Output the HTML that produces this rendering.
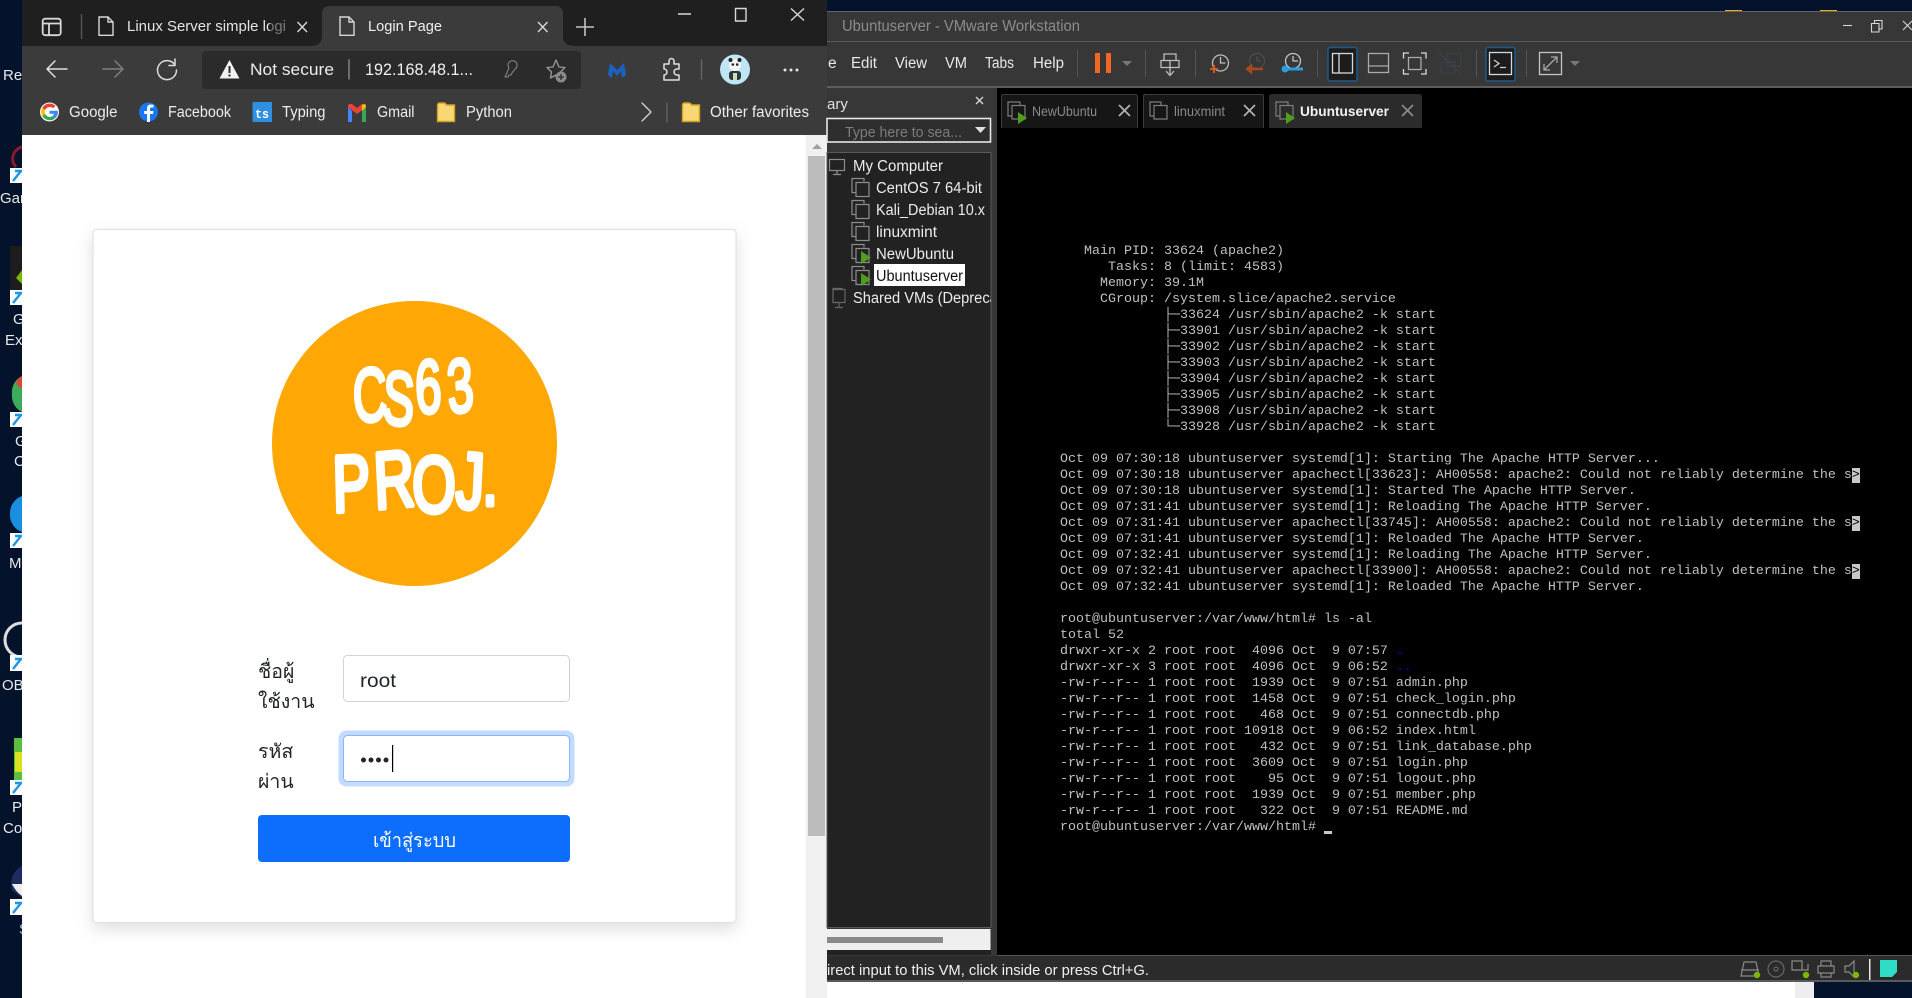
<!DOCTYPE html>
<html lang="en">
<head>
<meta charset="utf-8">
<title>Screenshot</title>
<style>
html,body{margin:0;padding:0;width:1912px;height:998px;overflow:hidden;background:#04122b}
svg{position:absolute;left:0;top:0;display:block}
svg text{font-family:"Liberation Sans","Noto Sans CJK SC",sans-serif;white-space:pre}
#term{position:absolute;left:1060px;top:243.500px;margin:0;font:13.33px/16px "Liberation Mono","DejaVu Sans Mono",monospace;color:#c0c0c0;white-space:pre}
#term b{font-weight:normal;background:#c8c8c8;color:#000}
#term i{font-style:normal;color:#0000d0}
#cur{position:absolute;left:1324px;top:831px;width:8px;height:3px;background:#c8c8c8}
</style>
</head>
<body>
<svg width="1912" height="998" viewBox="0 0 1912 998" xmlns="http://www.w3.org/2000/svg">
<defs>
<filter id="s" x="-10%" y="-10%" width="120%" height="120%"><feDropShadow dx="0" dy="6" stdDeviation="8" flood-color="#000" flood-opacity=".13"/></filter>
<clipPath id="treeclip"><rect x="827" y="152" width="164" height="775"/></clipPath>
</defs>
<rect width="1912" height="998" fill="#04122b"/>
<!-- desktop left -->
<g fill="#e8e8e8" font-size="15">
<text x="3" y="80">Rec</text><text x="0" y="203">Gar</text><text x="13" y="324">G</text><text x="5" y="345">Exp</text><text x="15" y="446">G</text><text x="14" y="466">C</text><text x="9" y="568">M</text><text x="2" y="690">OB</text><text x="12" y="812">Py</text><text x="3" y="833">Co</text><text x="19" y="934" fill="#9fd0ff">S</text>
</g>
<path d="M22 147a12 12 0 0 0 -6 20" fill="none" stroke="#8b1a2a" stroke-width="3"/>
<rect x="10" y="246" width="12" height="44" fill="#1d1d1d"/><path d="M16 278l6-8v14z" fill="#76b900"/>
<path d="M22 376a18 18 0 0 0 -10 18a18 18 0 0 0 10 18z" fill="#3cab5a"/><path d="M22 376a12 12 0 0 0 -6 8l6 5z" fill="#d8483a"/>
<path d="M22 496a18 18 0 0 0 -12 18a18 18 0 0 0 12 18z" fill="#1a8fe0"/>
<path d="M22 623a17 17 0 0 0 0 34" fill="none" stroke="#ddd" stroke-width="3"/>
<rect x="14" y="738" width="8" height="42" fill="#5abf3c"/><rect x="15" y="752" width="7" height="20" fill="#dde020"/>
<path d="M22 866a20 20 0 0 0 -10 24l10 8z" fill="#1c2c60"/><path d="M12 884q4 8 10 12v-12z" fill="#eee"/>
<g fill="#fff"><rect x="10" y="168" width="12" height="15"/><rect x="10" y="290" width="12" height="15"/><rect x="10" y="412" width="12" height="15"/><rect x="10" y="533" width="12" height="15"/><rect x="10" y="655" width="12" height="16"/><rect x="10" y="780" width="12" height="15"/><rect x="10" y="899" width="12" height="16"/></g>
<g fill="none" stroke="#1e96e8" stroke-width="2.4"><path d="M13 181l8-10M15 171h7"/><path d="M13 303l8-10M15 293h7"/><path d="M13 425l8-10M15 415h7"/><path d="M13 546l8-10M15 536h7"/><path d="M13 669l8-10M15 659h7"/><path d="M13 793l8-10M15 783h7"/><path d="M13 913l8-10M15 903h7"/></g>

<!-- browser chrome -->
<rect x="22" y="0" width="805" height="46" fill="#1f1f1f"/>
<rect x="22" y="46" width="805" height="89" fill="#3b3b3b"/>
<path d="M310 46q12 0 12-10V14q0-8 8-8h225q8 0 8 8v22q0 10 12 10z" fill="#3b3b3b"/>
<g fill="none" stroke="#d8d8d8" stroke-width="1.400">
<rect x="42.700" y="18.700" width="18" height="16.500" rx="2.500" stroke-width="1.800"/><path d="M43 23.500h17M49 23.500v11.500" stroke-width="1.800"/>
<path d="M81.500 14v25" stroke="#555"/>
<path d="M99 17h9l5 5v13.300h-14zM108 17v5h5"/>
<path d="M340 17h9l5 5v13.300h-14zM349 17v5h5"/>
<path d="M297.500 22l9.500 10M307 22l-9.500 10M538 22l9.500 10M547.500 22l-9.500 10"/>
<path d="M585 18v18M576 27h18" stroke="#c4c4c4" stroke-width="1.600"/>
<path d="M678 14h13M735.500 8.500h10.500v12.500h-10.500zM791 8.500l13 12M804 8.500l-13 12"/>
</g>
<g fill="#e4e4e4" font-size="15">
<text x="127" y="31" textLength="159" lengthAdjust="spacingAndGlyphs">Linux Server simple logi</text>
<text x="368" y="31" textLength="74" lengthAdjust="spacingAndGlyphs" fill="#f0f0f0">Login Page</text>
</g>
<rect x="270" y="12" width="18" height="28" fill="#1f1f1f" opacity=".55"/>
<rect x="202" y="51" width="379" height="38" rx="4" fill="#2b2b2b"/>
<g fill="none" stroke-linecap="round" stroke-linejoin="round">
<path d="M47 69h20M47 69l8-8M47 69l8 8" stroke="#e0e0e0" stroke-width="1.500"/>
<path d="M103 69h20M123 69l-8-8M123 69l-8 8" stroke="#808080" stroke-width="1.500"/>
<path d="M175 65a9.500 9.500 0 1 0 1.500 5M175 59v6.500h-6" stroke="#dcdcdc" stroke-width="1.500"/>
<path d="M349 60v19" stroke="#8a8a8a" stroke-width="1.400"/>
<path d="M517 65a4.500 4.500 0 1 0-8 3l-4 9h3l1-2h2l1-2 3-4a4.500 4.500 0 0 0 2-4z" stroke="#777" stroke-width="1.300"/>
<path d="M556 60l3 7 6 .5-4.500 4.500 1 6-5.500-3-5.500 3 1-6-4.500-4.500 6-.5z" stroke="#999" stroke-width="1.300"/>
<path d="M664 64h5v-3a2.500 2.500 0 0 1 5 0v3h5v5h-2a3 3 0 0 0 0 6h2v5h-15v-5a3 3 0 0 0 0-6z" stroke="#e0e0e0" stroke-width="1.500"/>
<path d="M701.500 60v19" stroke="#666" stroke-width="1.400"/>
<path d="M642 103l9 9-9 9" stroke="#d4d4d4" stroke-width="1.300"/>
<path d="M667 103v19" stroke="#666" stroke-width="1.200"/>
</g>
<circle cx="561" cy="77" r="5.500" fill="#8c8c8c"/><path d="M561 74v6M558 77h6" stroke="#2b2b2b" stroke-width="1.300"/>
<path d="M229.500 60l10 18.500h-20z" fill="#f2f2f2"/><path d="M229.500 66v7M229.500 74.500v2" stroke="#2b2b2b" stroke-width="2"/>
<text x="250" y="75" font-size="17" fill="#ececec" textLength="84" lengthAdjust="spacingAndGlyphs">Not secure</text>
<text x="365" y="75" font-size="17" fill="#f0f0f0" textLength="108" lengthAdjust="spacingAndGlyphs">192.168.48.1...</text>
<path d="M608 75l2-12 7 7 7-7 2 12-4 3-1-7-4 5-4-5-1 7z" fill="#1b62c0"/>
<circle cx="735" cy="69.500" r="15" fill="#bfe6f5"/>
<circle cx="735" cy="65" r="6" fill="#f4f4f4"/><circle cx="730.500" cy="60" r="2" fill="#222"/><circle cx="739.500" cy="60" r="2" fill="#222"/><circle cx="732.800" cy="64.500" r="1.300" fill="#222"/><circle cx="737.200" cy="64.500" r="1.300" fill="#222"/>
<rect x="729" y="71" width="12" height="9" rx="3" fill="#2f3a33"/><rect x="733" y="73" width="4" height="7" fill="#c8e0c0"/>
<g fill="#e4e4e4"><circle cx="785" cy="70" r="1.500"/><circle cx="791" cy="70" r="1.500"/><circle cx="797" cy="70" r="1.500"/></g>
<!-- bookmarks -->
<circle cx="49.500" cy="112" r="9.500" fill="#fff"/>
<path d="M49.500 103.500a8.500 8.500 0 0 1 6 2.400l-2.400 2.400a5 5 0 0 0-8 1.800l-2.800-2.200a8.500 8.500 0 0 1 7.200-4.400z" fill="#ea4335"/>
<path d="M42.300 107.900l2.800 2.200a5 5 0 0 0 0 3.800l-2.800 2.200a8.500 8.500 0 0 1 0-8.200z" fill="#fbbc05"/>
<path d="M42.300 116.100l2.800-2.200a5 5 0 0 0 7.400 2.200l2.700 2.100a8.500 8.500 0 0 1-12.900-2.100z" fill="#34a853"/>
<path d="M58 112.800a8.500 8.500 0 0 1-2.800 5.400l-2.700-2.100a3.600 3.600 0 0 0 1.400-2.400h-4.400v-3h8.300z" fill="#4285f4"/>
<circle cx="148.500" cy="112" r="9.500" fill="#1877f2"/><path d="M150 122v-8h3l.5-3H150v-2q0-1.500 1.700-1.500H153.500v-2.800q-1-.2-2.600-.2-3.900 0-3.900 4v2.500h-2.800v3H147v8z" fill="#fff"/>
<rect x="252.500" y="102" width="19.500" height="20" fill="#2f8fe0"/><text x="255" y="118" font-size="13" font-weight="bold" fill="#fff" textLength="14" lengthAdjust="spacingAndGlyphs" style="font-family:'Liberation Mono',monospace">ts</text>
<path d="M348 107v15h4v-11z" fill="#4285f4"/><path d="M362 111v11h4v-15z" fill="#34a853"/><path d="M348 107q0-4 4-3l5 4 5-4q4-1 4 3l-9 7z" fill="#ea4335"/><path d="M362 105l2-1q2 0 2 3l-4 4z" fill="#fbbc05"/>
<path d="M437.500 106q0-3 2-3h4q2 0 3 2h8v16.500h-17z" fill="#f8d775" stroke="#d4a11e" stroke-width="1.400"/>
<path d="M682.500 106q0-3 2-3h4q2 0 3 2h8v16.500h-17z" fill="#f8d775" stroke="#d4a11e" stroke-width="1.400"/>
<g fill="#ececec" font-size="15.500">
<text x="69" y="117" textLength="48.500" lengthAdjust="spacingAndGlyphs">Google</text>
<text x="168" y="117" textLength="63" lengthAdjust="spacingAndGlyphs">Facebook</text>
<text x="282" y="117" textLength="43.500" lengthAdjust="spacingAndGlyphs">Typing</text>
<text x="377" y="117" textLength="37.500" lengthAdjust="spacingAndGlyphs">Gmail</text>
<text x="466" y="117" textLength="46" lengthAdjust="spacingAndGlyphs">Python</text>
<text x="710" y="117" textLength="99" lengthAdjust="spacingAndGlyphs">Other favorites</text>
</g>

<!-- browser content -->
<rect x="22" y="135" width="805" height="863" fill="#fff"/>
<rect x="806" y="135" width="21" height="863" fill="#f0f0f0"/>
<path d="M817 144l5 5h-10z" fill="#a0a0a0"/>
<rect x="808" y="156" width="17" height="680" fill="#bcbcbc"/>
<!-- card -->
<rect x="93" y="229.500" width="643" height="693" rx="3" fill="#fff" stroke="#dfdfdf" filter="url(#s)"/>
<circle cx="414.500" cy="443.500" r="142.500" fill="#ffa704"/>
<g fill="#fff" stroke="#fff" stroke-linejoin="round" stroke-linecap="round">
<text transform="scale(.62 1)" font-size="76" stroke-width="4" x="571 616 671 724" y="423 423 414 414" rotate="-4 4 -3 -6">CS63</text>
<text transform="scale(.7 1)" font-size="80" stroke-width="5" x="476 536 589 650 689" y="512 509 512 507 505" rotate="-2 -4 0 4 0">PROJ.</text>
</g>
<!-- form -->
<g fill="#212529" font-size="19.500">
<text x="258" y="678">ชื่อผู้</text>
<text x="258" y="708">ใช้งาน</text>
<text x="258" y="758">รหัส</text>
<text x="258" y="788">ผ่าน</text>
</g>
<rect x="343.500" y="655.500" width="226" height="46" rx="4" fill="#fff" stroke="#ced4da"/>
<text x="360" y="687" font-size="19.500" fill="#212529" textLength="36" lengthAdjust="spacingAndGlyphs">root</text>
<rect x="338.500" y="730.500" width="236" height="56" rx="8" fill="#c2dbfe"/>
<rect x="343.500" y="735.500" width="226" height="46" rx="4" fill="#fff" stroke="#86b7fe"/>
<g fill="#212529"><circle cx="363.500" cy="760" r="2.500"/><circle cx="371" cy="760" r="2.500"/><circle cx="378.500" cy="760" r="2.500"/><circle cx="386" cy="760" r="2.500"/></g>
<rect x="392" y="745" width="1.200" height="27" fill="#000"/>
<rect x="258" y="815" width="312" height="47" rx="4" fill="#0d6efd"/>
<text x="373" y="847" font-size="19.500" fill="#fff" textLength="83" lengthAdjust="spacingAndGlyphs">เข้าสู่ระบบ</text>

<!-- vmware window -->
<rect x="827" y="11" width="1085" height="971" fill="#373737"/>
<rect x="827" y="11" width="1085" height="1" fill="#5c6670"/>
<rect x="827" y="41" width="1085" height="1" fill="#5a5a5a"/>
<rect x="827" y="86" width="1085" height="2" fill="#5c5c5c"/>
<rect x="1725" y="10" width="17" height="1" fill="#fa0"/><rect x="1820" y="10" width="17" height="1" fill="#fa0"/>
<text x="842" y="31" font-size="15.500" fill="#8c8c8c" textLength="238" lengthAdjust="spacingAndGlyphs">Ubuntuserver - VMware Workstation</text>
<g fill="none" stroke="#d8d8d8" stroke-width="1.100"><path d="M1843 25.500h9"/><path d="M1871.500 23.500h7.500v8.500h-7.500zM1874.500 23v-2.500h7.500v8.500h-3"/><path d="M1903 21l9 9M1912 21l-9 9"/></g>
<g fill="#e8e8e8" font-size="15.500">
<text x="828" y="68">e</text>
<text x="851" y="68" textLength="26" lengthAdjust="spacingAndGlyphs">Edit</text>
<text x="895" y="68" textLength="32" lengthAdjust="spacingAndGlyphs">View</text>
<text x="945" y="68" textLength="22" lengthAdjust="spacingAndGlyphs">VM</text>
<text x="985" y="68" textLength="29" lengthAdjust="spacingAndGlyphs">Tabs</text>
<text x="1033" y="68" textLength="31" lengthAdjust="spacingAndGlyphs">Help</text>
</g>
<g fill="#555"><rect x="1077" y="50" width="1" height="27"/><rect x="1145" y="50" width="1" height="27"/><rect x="1195" y="50" width="1" height="27"/><rect x="1317" y="50" width="1" height="27"/><rect x="1476" y="50" width="1" height="27"/><rect x="1526" y="50" width="1" height="27"/></g>
<rect x="1095" y="53" width="5" height="20" fill="#f26522"/><rect x="1106" y="53" width="5" height="20" fill="#f26522"/>
<path d="M1122 61h10l-5 5z" fill="#777"/>
<g fill="none" stroke="#bcbcbc" stroke-width="1.300">
<path d="M1161 60.500h18v7h-18zM1164 60.500v-6.500h12v6.500M1170 60.500v7M1170 67.500v7M1166 71l4 4.500 4-4.500"/>
<circle cx="1220.500" cy="63" r="8"/><path d="M1220.500 57v6h5" />
<circle cx="1293" cy="61" r="7.500" stroke="#c4c4c4"/><path d="M1293 56v5h5" stroke="#c4c4c4"/>
</g>
<path d="M1210 69h8M1214 65v8" stroke="#e85a20" stroke-width="1.800" fill="none"/>
<circle cx="1257" cy="61" r="7.500" fill="none" stroke="#4c4c4c" stroke-width="1.300"/><path d="M1257 56v5h4" fill="none" stroke="#4c4c4c" stroke-width="1.300"/>
<path d="M1247 69h16M1247 69l4-3v6z" stroke="#a84818" stroke-width="2.400" fill="#a84818"/>
<path d="M1283 69h20" stroke="#2b9be0" stroke-width="3"/><circle cx="1285" cy="69" r="3.500" fill="#2b9be0"/>
<rect x="1328" y="47.500" width="29" height="33.500" rx="2" fill="#1c1c1c" stroke="#1e5a8c" stroke-width="1.500"/>
<g fill="none" stroke="#d8d8d8" stroke-width="1.300">
<rect x="1332.500" y="53.500" width="20" height="19.500"/><path d="M1339 53.500v19.500"/>
<rect x="1368.500" y="53.500" width="20" height="19" stroke="#aaa"/><path d="M1368.500 66h20" stroke="#aaa"/>
<path d="M1403.500 58.500v-5.500h5.500M1421 53h5v5.500M1426 69v5h-5M1409 74h-5.500v-5"/>
<rect x="1408.500" y="57.500" width="12.500" height="12" stroke="#aaa"/>
</g>
<g fill="none" stroke="#38424a" stroke-width="1.300"><rect x="1447" y="53.500" width="14" height="13"/><rect x="1441" y="62" width="14" height="11"/><path d="M1439 53l22 21"/></g>
<rect x="1486" y="47.500" width="29" height="33.500" rx="2" fill="#1c1c1c" stroke="#1e5a8c" stroke-width="1.500"/>
<rect x="1489.500" y="52.500" width="22" height="22" fill="none" stroke="#d8d8d8" stroke-width="1.300"/>
<path d="M1494 60l5 3.500-5 3.500M1500 67.500h6" fill="none" stroke="#d0d0d0" stroke-width="1.300"/>
<rect x="1539.500" y="52.500" width="22" height="22" fill="none" stroke="#c4c4c4" stroke-width="1.300"/>
<path d="M1544 70l13-13M1551 57h6v6M1544 64v6h6" fill="none" stroke="#a8a8a8" stroke-width="1.300"/>
<path d="M1570 61h10l-5 5z" fill="#777"/>

<!-- library -->
<text x="827" y="109" font-size="15" fill="#e0e0e0">ary</text>
<path d="M976 97l7 7M983 97l-7 7" stroke="#d8d8d8" stroke-width="1.300"/>
<rect x="827" y="118.500" width="163.500" height="23.500" fill="#2e2e2e" stroke="#e6e6e6" stroke-width="1.600"/>
<text x="845" y="137" font-size="15" fill="#7c7c7c" textLength="117" lengthAdjust="spacingAndGlyphs">Type here to sea...</text>
<path d="M975 127h11l-5.500 6z" fill="#e0e0e0"/>
<rect x="827" y="152.500" width="164" height="775" fill="#222" stroke="#5a5a5a"/>
<g fill="none" stroke="#8c8c8c" stroke-width="1.200">
<rect x="829.500" y="159.500" width="15" height="11"/><path d="M837 171v3M833 174.500h8"/>
<path d="M852 179v-.5h12v3M856 182.500h13v14h-13zM852 178.500v14h4"/>
<path d="M852 201v-.5h12v3M856 204.500h13v14h-13zM852 200.500v14h4"/>
<path d="M852 223v-.5h12v3M856 226.500h13v14h-13zM852 222.500v14h4"/>
<path d="M852 245v-.5h12v3M856 248.500h13v14h-13zM852 244.500v14h4"/>
<path d="M852 267v-.5h12v3M856 270.500h13v14h-13zM852 266.500v14h4"/>
<path d="M833 289.500h12v13h-12zM833 289.500v-1h9v1M839 303v4M835 307.500h8" stroke="#666"/>
</g>
<path d="M861 251l10 6.500-10 6.500z" fill="#4f9d1c"/><path d="M861 273l10 6.500-10 6.500z" fill="#4f9d1c"/>
<rect x="874" y="264" width="91" height="22" fill="#fff"/>
<g fill="#ececec" font-size="15.500" clip-path="url(#treeclip)">
<text x="853" y="171" textLength="90" lengthAdjust="spacingAndGlyphs">My Computer</text>
<text x="876" y="193" textLength="106" lengthAdjust="spacingAndGlyphs">CentOS 7 64-bit</text>
<text x="876" y="215" textLength="109" lengthAdjust="spacingAndGlyphs">Kali_Debian 10.x</text>
<text x="876" y="237" textLength="61" lengthAdjust="spacingAndGlyphs">linuxmint</text>
<text x="876" y="259" textLength="78" lengthAdjust="spacingAndGlyphs">NewUbuntu</text>
<text x="876" y="281" textLength="87" lengthAdjust="spacingAndGlyphs" fill="#111">Ubuntuserver</text>
<text x="853" y="303" textLength="170" lengthAdjust="spacingAndGlyphs">Shared VMs (Deprecated)</text>
</g>
<rect x="827" y="929" width="163.500" height="21" fill="#efefef"/>
<rect x="827" y="937" width="116" height="6" fill="#8a8a8a"/>
<rect x="827" y="950" width="164" height="5" fill="#222"/>

<!-- terminal -->
<rect x="997" y="88" width="915" height="867" fill="#000"/>
<rect x="997" y="955" width="915" height="1" fill="#555"/>
<rect x="1001" y="94" width="136" height="34" fill="#161616"/><path d="M1001.500 128V97q0-2.500 2.500-2.500h131q2.500 0 2.500 2.500v31" fill="none" stroke="#3c3c3c"/>
<rect x="1143" y="94" width="121" height="34" fill="#161616"/><path d="M1143.500 128V97q0-2.500 2.500-2.500h115q2.500 0 2.500 2.500v31" fill="none" stroke="#3c3c3c"/>
<path d="M1269 128V97q0-3 3-3h147q3 0 3 3v31z" fill="#2b2b2b"/>
<g fill="none" stroke="#7c7c7c" stroke-width="1.200">
<path d="M1008 104v-2h12v3M1012 105.500h13v13.500h-13zM1008 102v14h4"/>
<path d="M1150 103v-1h11v3M1154 105.500h13v13.500h-13zM1150 102v14h4"/>
<path d="M1276 104v-2h12v3M1280 105.500h13v13.500h-13zM1276 102v14h4"/>
</g>
<path d="M1018 112l9 6-9 6z" fill="#4f9d1c"/><path d="M1286 112l9 6-9 6z" fill="#4f9d1c"/>
<g font-size="14">
<text x="1032" y="116" fill="#8a8a8a" textLength="65" lengthAdjust="spacingAndGlyphs">NewUbuntu</text>
<text x="1174" y="116" fill="#8a8a8a" textLength="51" lengthAdjust="spacingAndGlyphs">linuxmint</text>
<text x="1300" y="116" fill="#f2f2f2" font-weight="bold" textLength="89" lengthAdjust="spacingAndGlyphs">Ubuntuserver</text>
</g>
<g fill="none" stroke="#b0b0b0" stroke-width="1.800">
<path d="M1119 105l11 11M1130 105l-11 11"/><path d="M1244 105l11 11M1255 105l-11 11"/><path d="M1402 105l11 11M1413 105l-11 11" stroke="#8a8a8a"/>
</g>

<!-- status bar -->
<rect x="827" y="956" width="1085" height="24" fill="#2b2b2b"/>
<rect x="827" y="980" width="1085" height="2" fill="#5a5a5a"/>
<text x="827" y="975" font-size="14.500" fill="#f0f0f0" textLength="322" lengthAdjust="spacingAndGlyphs">irect input to this VM, click inside or press Ctrl+G.</text>
<g fill="none" stroke="#8a8a8a" stroke-width="1.200">
<path d="M1741 976l3-14h12l3 14zM1741 970h18"/>
<circle cx="1776" cy="969" r="8" stroke="#666"/><circle cx="1776" cy="969" r="2" stroke="#666"/>
<path d="M1792 961h10v9h-10zM1799 970h9v-6"/>
<path d="M1821 961h10v5h-10zM1818 966h16v7h-16zM1821 973h10v4h-10z"/>
<path d="M1845 966h4l5-5v16l-5-5h-4z"/>
</g>
<circle cx="1757" cy="975" r="3.200" fill="#7ab800"/><circle cx="1806" cy="975" r="3.200" fill="#7ab800"/><circle cx="1856" cy="975" r="3.200" fill="#7ab800"/>
<rect x="1869" y="959" width="1.500" height="21" fill="#e8e8e8"/>
<path d="M1880 960h17v12l-5 5h-12z" fill="#30dcc6"/>

<!-- bottom -->
<rect x="827" y="982" width="968" height="16" fill="#fff"/>
<rect x="1795" y="982" width="19" height="16" fill="#eee"/>
<rect x="1814" y="982" width="98" height="16" fill="#04122b"/>
</svg>
<pre id="term">   Main PID: 33624 (apache2)
      Tasks: 8 (limit: 4583)
     Memory: 39.1M
     CGroup: /system.slice/apache2.service
             ├─33624 /usr/sbin/apache2 -k start
             ├─33901 /usr/sbin/apache2 -k start
             ├─33902 /usr/sbin/apache2 -k start
             ├─33903 /usr/sbin/apache2 -k start
             ├─33904 /usr/sbin/apache2 -k start
             ├─33905 /usr/sbin/apache2 -k start
             ├─33908 /usr/sbin/apache2 -k start
             └─33928 /usr/sbin/apache2 -k start

Oct 09 07:30:18 ubuntuserver systemd[1]: Starting The Apache HTTP Server...
Oct 09 07:30:18 ubuntuserver apachectl[33623]: AH00558: apache2: Could not reliably determine the s<b>&gt;</b>
Oct 09 07:30:18 ubuntuserver systemd[1]: Started The Apache HTTP Server.
Oct 09 07:31:41 ubuntuserver systemd[1]: Reloading The Apache HTTP Server.
Oct 09 07:31:41 ubuntuserver apachectl[33745]: AH00558: apache2: Could not reliably determine the s<b>&gt;</b>
Oct 09 07:31:41 ubuntuserver systemd[1]: Reloaded The Apache HTTP Server.
Oct 09 07:32:41 ubuntuserver systemd[1]: Reloading The Apache HTTP Server.
Oct 09 07:32:41 ubuntuserver apachectl[33900]: AH00558: apache2: Could not reliably determine the s<b>&gt;</b>
Oct 09 07:32:41 ubuntuserver systemd[1]: Reloaded The Apache HTTP Server.

root@ubuntuserver:/var/www/html# ls -al
total 52
drwxr-xr-x 2 root root  4096 Oct  9 07:57 <i>.</i>
drwxr-xr-x 3 root root  4096 Oct  9 06:52 <i>..</i>
-rw-r--r-- 1 root root  1939 Oct  9 07:51 admin.php
-rw-r--r-- 1 root root  1458 Oct  9 07:51 check_login.php
-rw-r--r-- 1 root root   468 Oct  9 07:51 connectdb.php
-rw-r--r-- 1 root root 10918 Oct  9 06:52 index.html
-rw-r--r-- 1 root root   432 Oct  9 07:51 link_database.php
-rw-r--r-- 1 root root  3609 Oct  9 07:51 login.php
-rw-r--r-- 1 root root    95 Oct  9 07:51 logout.php
-rw-r--r-- 1 root root  1939 Oct  9 07:51 member.php
-rw-r--r-- 1 root root   322 Oct  9 07:51 README.md
root@ubuntuserver:/var/www/html# </pre>
<div id="cur"></div>
</body>
</html>
